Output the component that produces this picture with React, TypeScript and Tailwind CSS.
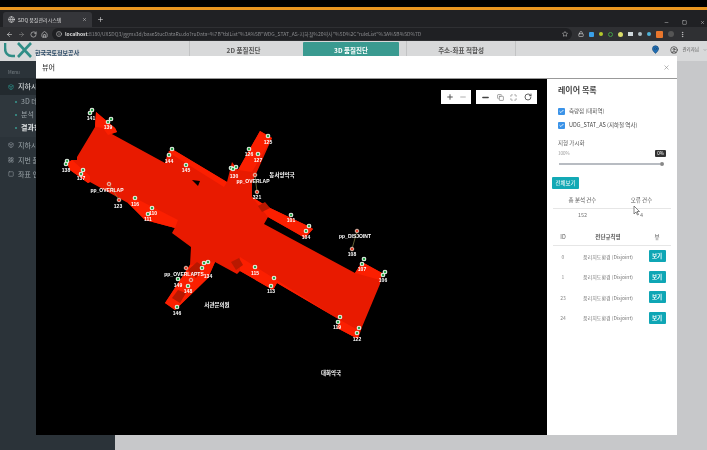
import { ArrowLeft, ArrowRight, RotateCw, Home, Globe, Star, X, Plus, Minus, Maximize, Copy, Info, Lock, MapPin, CircleUser, ChevronDown, MoreVertical, Box, LayoutGrid, Square, Check } from "lucide-react";

const font = "font-['Noto_Sans_CJK_KR','Noto_Sans',sans-serif]";

const body = "77,157 95,127 96,112 115,128 117,132 108,135 110,133 165,163 167,155 172,149 227,182 232,162 238,170 260,131 272,138 252,183 252,197 268,207 310,227 313,229 305,238 268,217 264,224 355,273 362,262 382,273 380,284 362,327 358,339 337,328 340,320 277,283 273,290 240,271 237,274 215,262 208,278 175,310 165,303 190,265 191,247 172,233 178,222 175,228 145,220 128,203 90,182 88,183 70,170 67,163 72,160 77,160";

const bright = [
  "96,112 115,128 117,132 108,135 103,128 95,127",
  "67,163 72,160 90,176 90,182 88,183 70,170",
  "128,203 133,197 178,220 175,228 145,220",
  "168,152 172,149 227,182 224,187 200,172",
  "252,197 268,207 310,227 313,229 305,238 268,217",
  "240,257 340,320 358,330 358,339 337,328 340,320 277,283 273,290 240,271",
  "215,262 208,278 175,310 165,303 190,265",
  "238,170 260,131 272,138 252,172",
  "355,273 362,262 382,273 380,280",
];

const dark = [
  "231,262 239,258 243,265 236,270",
  "258,206 265,202 270,208 262,212",
  "188,270 197,262 203,266 196,278",
  "178,290 186,293 180,303 172,298",
];

// [x, y] of the green pins on the map
const greens = [
  [92, 110], [90, 113], [111, 119], [108, 122], [67, 161], [66, 164], [83, 170], [81, 174],
  [172, 149], [169, 155], [186, 165], [249, 149], [268, 136], [258, 154], [231, 168], [236, 167],
  [233, 169], [135, 198], [152, 208], [148, 214], [291, 215], [309, 226], [306, 231], [364, 259],
  [362, 264], [385, 272], [383, 275], [255, 267], [274, 278], [271, 286], [340, 317], [338, 322],
  [359, 328], [357, 333], [208, 262], [204, 263], [202, 268], [178, 279], [188, 286], [177, 307],
];

const reds = [
  [109, 184], [119, 200], [255, 175], [257, 192], [357, 231], [352, 249], [186, 268], [191, 280],
];

const labels: [number, number, string][] = [
  [91, 118, "141"], [108, 127, "139"], [66, 170, "138"], [81, 178, "137"], [169, 161, "144"],
  [186, 170, "145"], [249, 154, "126"], [268, 142, "125"], [258, 160, "127"], [234, 176, "130"],
  [118, 206, "123"], [257, 197, "321"], [135, 204, "116"], [153, 213, "110"], [148, 219, "111"],
  [291, 220, "101"], [306, 237, "104"], [352, 254, "108"], [362, 269, "107"], [383, 280, "106"],
  [255, 273, "115"], [271, 291, "113"], [337, 327, "119"], [357, 339, "122"], [208, 276, "134"],
  [178, 285, "149"], [188, 291, "148"], [177, 313, "146"],
  [107, 190, "pp_OVERLAP"], [253, 181, "pp_OVERLAP"], [355, 236, "pp_DISJOINT"], [184, 274, "pp_OVERLAPTS"],
];

const places: [number, number, string][] = [
  [282, 175, "동서양약국"], [217, 305, "서관문의원"], [331, 373, "대화약국"],
];

const rules = [
  ["0", "품리치도환경 (Disjoint)"],
  ["1", "품리치도환경 (Disjoint)"],
  ["23", "품리치도환경 (Disjoint)"],
  ["24", "품리치도환경 (Disjoint)"],
];

function MapView() {
  return (
    <svg className="h-full w-full" viewBox="36 79 511 356">
      <rect x="36" y="79" width="511" height="356" fill="#000" />
      <polygon points={body} fill="#e81a00" />
      {bright.map((p) => (
        <polygon key={p} points={p} fill="#fb1f00" />
      ))}
      {dark.map((p) => (
        <polygon key={p} points={p} fill="#b81800" />
      ))}
      <polygon points="192,180 200,181 198,186" fill="#000" />
      <line x1="109" y1="184" x2="119" y2="200" stroke="#8a8a4a" strokeWidth="0.7" />
      <line x1="255" y1="175" x2="257" y2="192" stroke="#8a8a4a" strokeWidth="0.7" />
      <line x1="357" y1="231" x2="352" y2="249" stroke="#8a8a4a" strokeWidth="0.7" />
      {greens.map(([x, y]) => (
        <circle key={`${x}-${y}`} cx={x} cy={y} r="1.8" fill="#2fa84f" stroke="#e8f2e8" strokeWidth="1.1" />
      ))}
      {reds.map(([x, y]) => (
        <circle key={`${x}-${y}`} cx={x} cy={y} r="1.8" fill="#e8402a" stroke="#e8c8b8" strokeWidth="0.9" />
      ))}
      {labels.map(([x, y, t]) => (
        <text key={`${x}-${y}`} x={x} y={y + 2} textAnchor="middle" fontSize="5" fontWeight="700" fill="#fff" fontFamily="Liberation Sans">
          {t}
        </text>
      ))}
      {places.map(([x, y, t]) => (
        <text key={t} x={x} y={y + 2} textAnchor="middle" fontSize="5.5" fontWeight="700" fill="#fff" fontFamily="Noto Sans CJK KR">
          {t}
        </text>
      ))}
    </svg>
  );
}

function Toolbar() {
  return (
    <div className="absolute right-[10px] top-[11px] flex gap-[5px]">
      <div className="flex h-[14px] w-[30px] items-center justify-around bg-white px-[2px] text-[#555]">
        <Plus size={8} strokeWidth={3} />
        <Minus size={8} strokeWidth={2} className="text-[#888]" />
      </div>
      <div className="flex h-[14px] w-[61px] items-center justify-around bg-white px-[2px] text-[#666]">
        <Minus size={9} strokeWidth={4} className="text-[#444]" />
        <Copy size={7} />
        <Maximize size={7} />
        <RotateCw size={8} strokeWidth={2.5} className="text-[#444]" />
      </div>
    </div>
  );
}

function Tick() {
  return (
    <span className="flex h-[7px] w-[7px] items-center justify-center rounded-[1px] bg-[#3b93e8] text-white">
      <Check size={5} strokeWidth={4} />
    </span>
  );
}

function SidePanel() {
  return (
    <div className="relative flex w-[130px] flex-col bg-white text-[#555]">
      <p className="ml-[11px] mt-[5px] text-[8px] font-bold leading-[12px] text-[#444]">레이어 목록</p>
      <div className="ml-[11px] mt-[11px] flex items-center gap-[4px] text-[5.5px] leading-[8px]">
        <Tick />
        측량점 (대화역)
      </div>
      <div className="ml-[11px] mt-[6px] flex items-center gap-[4px] text-[5.5px] leading-[8px] text-[#444]">
        <Tick />
        UDG_STAT_AS (지하철 역사)
      </div>
      <p className="ml-[11px] mt-[10px] text-[5.5px] leading-[8px]">지형 가시화</p>
      <div className="mx-[11px] mt-[3px] flex items-center justify-between text-[4.5px] leading-[7px] text-[#999]">
        <span>100%</span>
        <span className="rounded-[1px] bg-[#333] px-[2px] text-white">0%</span>
      </div>
      <div className="ml-[12px] mt-[5px] flex w-[105px] items-center">
        <div className="h-[2px] flex-1 bg-[#b8bcc2]" />
        <div className="h-[4px] w-[4px] rounded-full bg-[#888]" />
      </div>
      <button className="ml-[5px] mt-[11px] h-[12px] w-[27px] rounded-[1px] bg-[#13a9b5] text-[5.5px] leading-[12px] text-white">전체보기</button>
      <div className="mx-[6px] mt-[3px] grid grid-cols-2 border-b border-[#e6e6e6] py-[4px] text-center text-[5.5px] leading-[8px] text-[#555]">
        <span>총 분석 건수</span>
        <span>오류 건수</span>
      </div>
      <div className="mx-[6px] grid grid-cols-2 pb-[3px] pt-[2px] text-center text-[5.5px] leading-[8px] text-[#777]">
        <span>152</span>
        <span>4</span>
      </div>
      <div className="mx-[6px] mt-[11px] grid grid-cols-[20px_70px_1fr] border-b border-[#e6e6e6] pb-[4px] text-center text-[5.5px] leading-[8px] text-[#555]">
        <span>ID</span>
        <span className="font-bold">전단규칙명</span>
        <span>뷰</span>
      </div>
      {rules.map(([id, name]) => (
        <div key={id} className="mx-[6px] grid h-[20.5px] grid-cols-[20px_70px_1fr] items-center text-center text-[5px] text-[#888]">
          <span>{id}</span>
          <span className="whitespace-nowrap text-[#777]">{name}</span>
          <span className="flex justify-center">
            <button className="h-[12px] w-[17px] rounded-[1px] bg-[#0fa6b5] text-[5.5px] font-bold leading-[12px] text-white">보기</button>
          </span>
        </div>
      ))}
      {/* mouse cursor in the capture */}
      <svg className="absolute left-[86px] top-[127px]" width="7" height="10" viewBox="0 0 7 10">
        <path d="M1 0v8l2-2 1.5 3 1-.5L4 5.5h2.5z" fill="#fff" stroke="#555" strokeWidth="0.7" />
      </svg>
    </div>
  );
}

function Modal() {
  return (
    <div className="absolute left-[36px] top-[56px] flex h-[379px] w-[641px] flex-col bg-white">
      <div className="flex h-[23px] items-center justify-between border-b border-[#999] px-[6px]">
        <span className="text-[7px] font-medium text-[#444]">뷰어</span>
        <X size={7} className="mr-[1px] text-[#888]" />
      </div>
      <div className="flex flex-1">
        <div className="relative w-[511px] bg-black">
          <MapView />
          <Toolbar />
        </div>
        <SidePanel />
      </div>
    </div>
  );
}

function BrowserBar() {
  return (
    <div className="flex h-[31px] flex-col bg-[#202124] text-[#ddd]">
      <div className="flex h-[17px] items-end justify-between">
        <div className="flex items-center">
          <div className="ml-[3px] flex h-[15px] w-[89px] items-center gap-[3px] rounded-t-[3px] bg-[#35363a] px-[5px] text-[5px]">
            <Globe size={7} />
            <span className="flex-1 whitespace-nowrap">SDQ 품질관리시스템</span>
            <X size={5} />
          </div>
          <Plus size={7} className="ml-[5px]" />
        </div>
        <div className="mb-[2px] mr-[2px] flex items-center gap-[13px]">
          <Minus size={5} />
          <Square size={5} />
          <X size={5} />
        </div>
      </div>
      <div className="flex h-[14px] items-center bg-[#2f3033] pl-[6px] pr-[3px]">
        <ArrowLeft size={7} />
        <ArrowRight size={7} className="ml-[5px] text-[#888]" />
        <RotateCw size={7} className="ml-[5px]" />
        <Home size={7} className="ml-[4px]" />
        <div className="ml-[4px] flex h-[12px] w-[520px] items-center gap-[3px] rounded-full bg-[#1f2023] px-[4px] text-[5px]">
          <Info size={6} />
          <span className="flex-1 overflow-hidden whitespace-nowrap text-[#8a8b8e]">
            <span className="font-bold text-[#ddd]">localhost</span>
            :8180/UXSDQ3/ggms3d/baseStucDataRu.do?ruData=%7B"tblList"%3A%5B"WDG_STAT_AS-지하철%20역사"%5D%2C"ruleList"%3A%5B%5D%7D
          </span>
          <Star size={6} />
        </div>
        <div className="ml-[6px] flex items-center gap-[5px]">
          <Lock size={6} className="text-[#eee]" />
          <span className="h-[5px] w-[5px] rounded-[1px] bg-[#3aa0e8]" />
          <span className="h-[4px] w-[4px] rounded-full bg-[#b4c92b]" />
          <span className="h-[5px] w-[5px] rounded-full border border-[#43a047]" />
          <span className="h-[5px] w-[5px] rounded-full bg-[#d9dc6a]" />
          <span className="h-[4px] w-[5px] bg-[#cfd8dc]" />
          <span className="h-[4px] w-[4px] rounded-full bg-[#b0bec5]" />
          <span className="h-[4px] w-[4px] rounded-full bg-[#4fb3d9]" />
          <span className="h-[7px] w-[7px] rounded-[1px] bg-[#e8762c]" />
          <span className="h-[6px] w-[6px] rounded-full bg-[#555]" />
          <MoreVertical size={7} />
        </div>
      </div>
    </div>
  );
}

function AppHeader() {
  return (
    <div className="flex h-[20px] bg-[#d8d9da]">
      <div className="relative w-[189px]">
        <svg className="absolute left-[4px] top-[1px]" width="29" height="16" viewBox="0 0 29 16">
          <path d="M1 1v5c0 5 3 8 7 8h3" fill="none" stroke="#2f8d86" strokeWidth="2.6" />
          <path d="M14 1l13 14M27 1L14 15" fill="none" stroke="#2f8d86" strokeWidth="2.6" />
        </svg>
        <span className="absolute left-[35px] top-[7px] whitespace-nowrap text-[6px] font-bold text-[#2b4a66]">한국국토정보공사</span>
      </div>
      <div className="flex w-[108px] justify-center border-l border-[#c2c3c4] pt-[3px] text-[6.5px] font-bold leading-[12px] text-[#555]">2D 품질진단</div>
      <div className="flex w-[110px] items-start border-r border-[#c2c3c4]">
        <div className="ml-[6px] mt-[1px] h-[19px] w-[96px] rounded-t-[1px] bg-[#3a9a90] pt-[2px] text-center text-[6.5px] font-bold leading-[12px] text-white">3D 품질진단</div>
      </div>
      <div className="flex w-[109px] justify-center border-r border-[#c2c3c4] pt-[3px] text-[6.5px] font-bold leading-[12px] text-[#555]">주소-좌표 적합성</div>
      <div className="flex flex-1 items-center justify-end gap-[4px] pb-[3px]">
        <MapPin size={9} className="mr-[6px] fill-[#1e6fb8] text-[#1e4f7a]" />
        <CircleUser size={8} className="text-[#333]" />
        <span className="whitespace-nowrap text-[4.5px] text-[#555]">관리자님</span>
        <ChevronDown size={4} className="text-[#555]" />
      </div>
    </div>
  );
}

function Sidebar() {
  const top = ["3D 데이터", "분석", "결과창"];
  const rest = ["지하시설물", "지번 품질", "좌표 연계"];
  const icons = [Box, LayoutGrid, Square];
  return (
    <div className="w-[115px] bg-[#2b3339] pt-[7px] text-[7px] text-[#9aa3a8]">
      <p className="pl-[8px] text-[4.5px] leading-[8px] text-[#7d868b]">Menu</p>
      <div className="mt-[2px] flex h-[17px] items-center gap-[4px] bg-[#232a2f] pl-[8px] text-[#d4d8da]">
        <Box size={6} className="text-[#2fa79c]" />
        <span className="font-medium">지하시설물</span>
      </div>
      <div className="bg-[#2f373d] pb-[3px]">
        {top.map((t) => (
          <div key={t} className={`flex h-[13px] items-center gap-[4px] pl-[15px] ${t === "결과창" ? "font-bold text-[#e4e7e8]" : ""}`}>
            <span className="h-[2px] w-[2px] rounded-full bg-[#3a9a90]" />
            {t}
          </div>
        ))}
      </div>
      <div className="mt-[1px]">
        {rest.map((t, i) => {
          const Icon = icons[i];
          return (
            <div key={t} className="flex h-[14.5px] items-center gap-[4px] pl-[8px]">
              <Icon size={6} />
              {t}
            </div>
          );
        })}
      </div>
    </div>
  );
}

export default function App() {
  return (
    <div className={`relative flex h-[450px] w-[707px] flex-col overflow-hidden bg-black blur-[0.5px] ${font}`}>
      <div className="h-[7px] bg-black" />
      <div className="h-[3px] bg-[#e8951f]" />
      <BrowserBar />
      <AppHeader />
      <div className="flex flex-1">
        <Sidebar />
        <div className="flex-1 bg-[#c7c8ca]" />
      </div>
      <Modal />
    </div>
  );
}
